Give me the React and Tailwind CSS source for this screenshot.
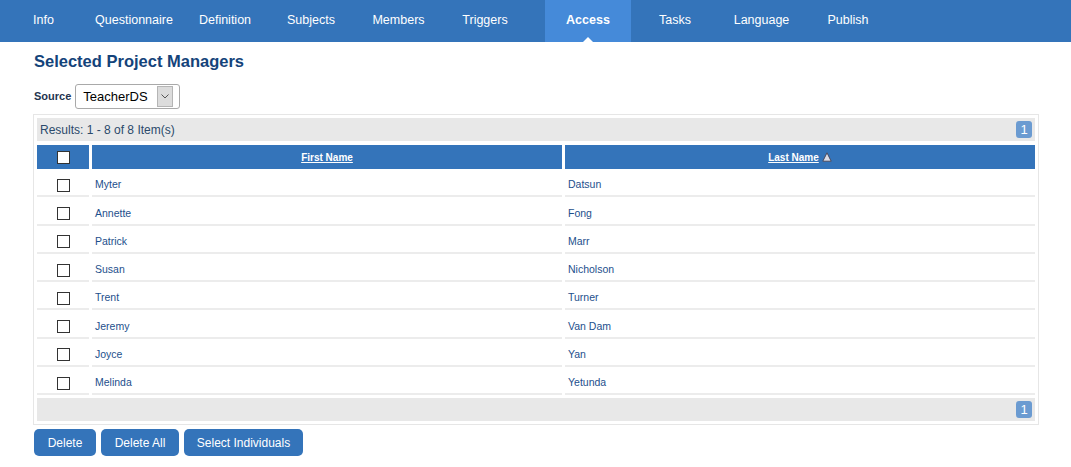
import React from "react";

// Tab strip, widths picked so each label sits where it should
const tabs = [
  { label: "Info", w: "w-[87px]" },
  { label: "Questionnaire", w: "w-[94px]" },
  { label: "Definition", w: "w-[88px]" },
  { label: "Subjects", w: "w-[84px]" },
  { label: "Members", w: "w-[91px]" },
  { label: "Triggers", w: "w-[82px]" },
  { label: "Access", w: "w-[86px] ml-[19px]", active: true },
  { label: "Tasks", w: "w-[88px]" },
  { label: "Language", w: "w-[85px]" },
  { label: "Publish", w: "w-[88px]" },
];

const people = [
  ["Myter", "Datsun"],
  ["Annette", "Fong"],
  ["Patrick", "Marr"],
  ["Susan", "Nicholson"],
  ["Trent", "Turner"],
  ["Jeremy", "Van Dam"],
  ["Joyce", "Yan"],
  ["Melinda", "Yetunda"],
];

const Check = () => (
  <span className="block w-[13px] h-[13px] border border-[#333] bg-white" />
);

const PageBadge = () => (
  <span className="w-[16px] h-[17px] rounded-[3px] bg-[#6b9bd1] text-white text-[13px] leading-[17px] text-center">
    1
  </span>
);

const SortUp = () => (
  <svg width="10" height="10" viewBox="0 0 10 10" className="ml-[3px] mb-[1px]">
    <path d="M5 0.8 L9.2 9.2 L0.8 9.2 Z" fill="#dcdce6" stroke="#4a4a5e" strokeWidth="1" />
  </svg>
);

export default function App() {
  return (
    <div className="w-[1071px] h-[467px] bg-white font-['Liberation_Sans',Arial,sans-serif] overflow-hidden">
      {/* Top nav */}
      <div className="h-[42px] bg-[#3474ba] flex">
        {tabs.map((t) => (
          <div
            key={t.label}
            className={`${t.w} relative h-full flex items-center justify-center text-[12.5px] text-white pb-[1px] ${
              t.active ? "bg-[#458ad9] font-bold" : ""
            }`}
          >
            {t.label}
            {t.active && (
              <span className="absolute bottom-0 left-1/2 -translate-x-1/2 w-0 h-0 border-l-[5px] border-r-[5px] border-b-[5px] border-l-transparent border-r-transparent border-b-white" />
            )}
          </div>
        ))}
      </div>

      <div className="pl-[34px] pr-[32px]">
        <h2 className="mt-[9px] text-[16.5px] leading-[20px] font-bold text-[#14437a]">
          Selected Project Managers
        </h2>

        <div className="mt-[13px] flex items-center">
          <span className="text-[11px] font-bold text-[#1f3550] mr-[4px]">Source</span>
          <div className="w-[105px] h-[25px] border border-[#a9a9a9] rounded-[3px] flex items-center justify-between pl-[7px] pr-[6px]">
            <span className="text-[13px] text-black">TeacherDS</span>
            <span className="w-[16px] h-[21px] bg-[#dcdcdc] border border-[#b5b5b5] flex items-center justify-center">
              <svg width="8" height="5" viewBox="0 0 8 5">
                <path d="M0.5 0.5 L4 4 L7.5 0.5" fill="none" stroke="#555" strokeWidth="1" />
              </svg>
            </span>
          </div>
        </div>

        {/* Grid */}
        <div className="mt-[5px] ml-[-1px] w-[1006px] border border-[#e6e6e6] p-[3px]">
          <div className="h-[23px] bg-[#e8e8e8] flex items-center justify-between pl-[3px] pr-[3px]">
            <span className="text-[12px] text-[#2b4a6b]">Results: 1 - 8 of 8 Item(s)</span>
            <PageBadge />
          </div>

          <div className="mt-[4px] grid grid-cols-[52px_470px_470px] gap-x-[3px]">
            <div className="h-[24px] bg-[#3474ba] flex items-center justify-center">
              <Check />
            </div>
            <div className="h-[24px] bg-[#3474ba] flex items-center justify-center">
              <span className="text-[10px] font-bold text-white underline">First Name</span>
            </div>
            <div className="h-[24px] bg-[#3474ba] flex items-center justify-center">
              <span className="text-[10px] font-bold text-white underline">Last Name</span>
              <SortUp />
            </div>

            {people.map(([first, last]) => (
              <React.Fragment key={first}>
                <div className="h-[28.3px] pt-[6px] border-b-[2px] border-[#ececec] flex items-center justify-center">
                  <Check />
                </div>
                <div className="h-[28.3px] pt-[6px] border-b-[2px] border-[#ececec] flex items-center pl-[3px] text-[10.5px] text-[#1d4f8c]">
                  {first}
                </div>
                <div className="h-[28.3px] pt-[6px] border-b-[2px] border-[#ececec] flex items-center pl-[3px] text-[10.5px] text-[#1d4f8c]">
                  {last}
                </div>
              </React.Fragment>
            ))}
          </div>

          <div className="mt-[3px] h-[23px] bg-[#e8e8e8] flex items-center justify-end pr-[3px]">
            <PageBadge />
          </div>
        </div>

        <div className="mt-[4px] flex gap-[5px]">
          {["Delete", "Delete All", "Select Individuals"].map((b, i) => (
            <button
              key={b}
              className={`h-[27px] rounded-[5px] bg-[#3474ba] text-white text-[12px] ${
                ["w-[62px]", "w-[78px]", "w-[119px]"][i]
              }`}
            >
              {b}
            </button>
          ))}
        </div>
      </div>
    </div>
  );
}
